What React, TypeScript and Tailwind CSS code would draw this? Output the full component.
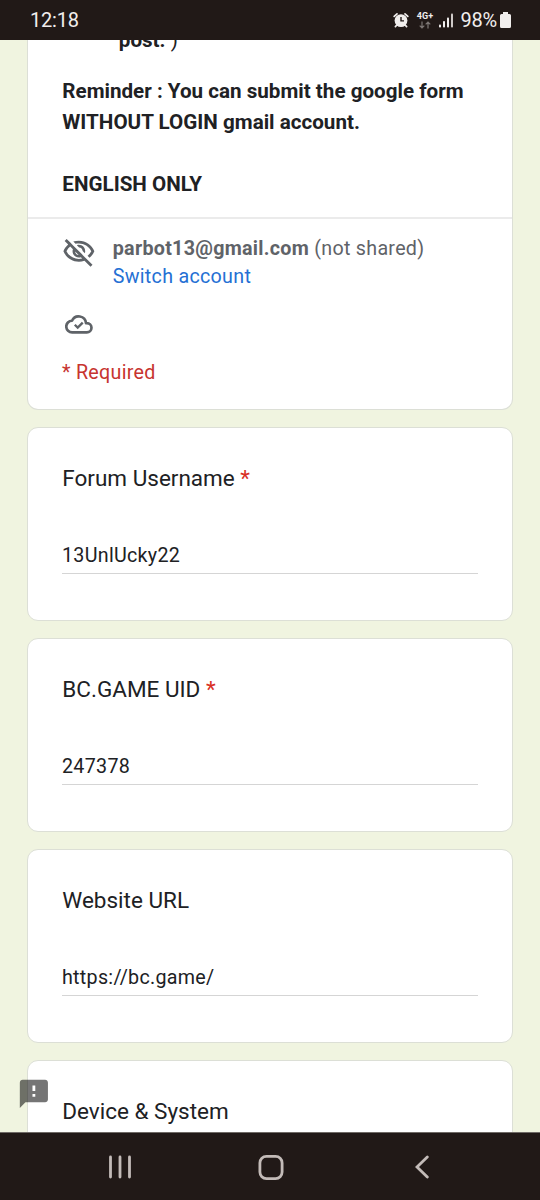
import React from "react";

type Question = { title: string; required?: boolean; value?: string };

const questions: Question[] = [
  { title: "Forum Username", required: true, value: "13UnlUcky22" },
  { title: "BC.GAME UID", required: true, value: "247378" },
  { title: "Website URL", value: "https://bc.game/" },
  { title: "Device & System", value: "" },
];

function StatusBar() {
  return (
    <header className="flex h-10 shrink-0 items-center justify-between bg-[#211917] pl-[30px] pr-[29px] text-[#f1eeed]">
      <span className="text-[20px] leading-10 tracking-[-0.2px]">12:18</span>
      <div className="flex items-center">
        <svg className="mr-[7px] h-4 w-4" viewBox="0 0 16 16" fill="none">
          <circle cx="8" cy="8.6" r="6.4" fill="#f1eeed" />
          <path d="M1.2 4.4 4 1.8M14.8 4.4 12 1.8M3.6 13.2 2.4 14.6M12.4 13.2l1.2 1.4" stroke="#f1eeed" strokeWidth="1.7" strokeLinecap="round" />
          <path d="M8 5v3.9h3" stroke="#211917" strokeWidth="1.4" />
        </svg>
        <div className="mr-[6px] flex w-[17px] flex-col items-center">
          <span className="text-[9px] leading-[9px] font-bold">4G+</span>
          <svg className="h-[8px] w-[12px]" viewBox="0 0 12 8" fill="none" stroke="#7d7775" strokeWidth="1.2">
            <path d="M3 .5v6.5M.7 4.7 3 7l2.3-2.3M9 7.5V1M6.7 3.3 9 1l2.3 2.3" />
          </svg>
        </div>
        <svg className="mr-[7px] h-[15px] w-[14px]" viewBox="0 0 14 15" fill="#f1eeed">
          <rect x="0" y="11.5" width="2" height="3" rx=".8" />
          <rect x="4" y="8" width="2" height="6.5" rx=".8" />
          <rect x="8" y="4.5" width="2" height="10" rx=".8" />
          <rect x="12" y="0.5" width="2" height="14" rx=".8" fill="#cfcac8" />
        </svg>
        <span className="text-[20px] leading-10 tracking-[-0.2px]">98%</span>
        <svg className="ml-[3px] h-4 w-[11px]" viewBox="0 0 11 16" fill="#f1eeed">
          <path d="M3 0h5v2h1.5Q11 2 11 3.5v11Q11 16 9.500 16h-8Q0 16 0 14.500v-11Q0 2 1.500 2H3z" />
        </svg>
      </div>
    </header>
  );
}

function EyeOffIcon() {
  return (
    <svg className="h-[33.75px] w-[33.75px] shrink-0" viewBox="0 0 24 24" fill="#5f6368">
      <path d="M10.58 7.25l1.56 1.56c1.38.07 2.47 1.17 2.54 2.54l1.56 1.56c.16-.44.26-.91.26-1.41C16.500 9.020 14.480 7 12 7c-.5 0-.97.1-1.420.25z" />
      <path d="M12 6c3.790 0 7.170 2.130 8.820 5.500-.64 1.320-1.560 2.440-2.660 3.330l1.420 1.420c1.510-1.260 2.700-2.890 3.430-4.740C21.270 7.110 17 4 12 4c-1.400 0-2.730.25-3.980.7L9.630 6.300C10.400 6.120 11.190 6 12 6z" />
      <path d="M16.430 15.930l-1.250-1.250-1.270-1.270-3.820-3.820-1.270-1.270-1.250-1.250-1.480-1.480-2.780-2.780-1.420 1.410 2.530 2.530C2.920 8.020 1.730 9.640 1 11.500 2.730 15.890 7 19 12 19c1.400 0 2.730-.25 3.980-.7l4.300 4.300 1.410-1.410-3.780-3.780-1.480-1.480zM11.860 14.190c-1.380-.07-2.470-1.170-2.540-2.540l2.540 2.540zM12 17c-3.790 0-7.170-2.130-8.820-5.500.64-1.320 1.560-2.440 2.660-3.330l1.910 1.910C7.600 10.530 7.500 11 7.500 11.500c0 2.480 2.020 4.500 4.500 4.500.5 0 .97-.1 1.420-.25l.95.95C13.600 16.880 12.810 17 12 17z" />
    </svg>
  );
}

function CloudDoneIcon() {
  return (
    <svg className="ml-[3px] h-[28px] w-[28px]" viewBox="0 0 24 24" fill="none" stroke="#5f6368" strokeWidth="2.300">
      <path d="M18.700 19.200H6.200A5 5 0 0 1 6 9.200A6.300 6.300 0 0 1 18 11.200H18.700a4 4 0 0 1 0 8z" strokeLinejoin="round" />
      <path d="M8.400 12.600l2.500 2.500 4.300-4.300" strokeWidth="2" />
    </svg>
  );
}

function IntroCard() {
  return (
    <section className="h-[370px] w-[486px] shrink-0 overflow-hidden rounded-b-[11px] border border-t-0 border-[#dcdfd6] bg-white">
      <div className="flow-root h-[177px] pl-[34.3px] text-[20.6px] leading-[31px] text-[#202124]">
        <p className="mt-[-15px] pl-[56.5px]">
          <b>post. </b>)
        </p>
        <p className="mt-[20px] font-bold tracking-[0.01px]">
          Reminder : You can submit the google form
          <br />
          WITHOUT LOGIN gmail account.
          <br />
          <br />
          ENGLISH ONLY
        </p>
      </div>
      <div className="border-t-2 border-[#ebebeb] pl-[34px]">
        <div className="flex gap-[17px] pt-[16px] text-[19.69px] leading-[28px] tracking-[0.28px]">
          <EyeOffIcon />
          <div>
            <p className="text-[#5f6368]">
              <span className="font-bold">parbot13@gmail.com</span> (not shared)
            </p>
            <p className="text-[#2570d4]">Switch account</p>
          </div>
        </div>
        <div className="mt-[19px]">
          <CloudDoneIcon />
        </div>
        <p className="mt-[21px] text-[19.69px] leading-[28px] tracking-[0.28px] text-[#c7342f]">* Required</p>
      </div>
    </section>
  );
}

function QuestionCard({ title, required, value }: Question) {
  return (
    <section className="h-[194px] w-[486px] shrink-0 rounded-[11px] border border-[#dcdfd6] bg-white px-[34px] pt-[33px] text-[#202124]">
      <h2 className="pl-[0.3px] text-[22.5px] leading-[34px]">
        {title}
        {required && <span className="text-[#d93025]"> *</span>}
      </h2>
      <div className="mt-[43px] h-[36px] border-b border-[#d5d5d5] text-[19.69px] leading-[36px] tracking-[0.28px]">
        {value}
      </div>
    </section>
  );
}

function NavigationBar() {
  return (
    <nav className="flex h-[68px] shrink-0 items-start border-t border-[#6f6a66] bg-[#211917] pt-[22px] pl-[108px]">
      <svg className="h-6 w-6" viewBox="0 0 24 24" stroke="#c3bbb8" strokeWidth="2.800" strokeLinecap="round">
        <path d="M2.500 2v20M12 2v20M21.500 2v20" />
      </svg>
      <svg className="ml-[126px] h-[26px] w-[26px]" viewBox="0 0 26 26" fill="none" stroke="#c3bbb8" strokeWidth="2.800">
        <rect x="1.900" y="1.400" width="22.200" height="22.200" rx="6.500" />
      </svg>
      <svg className="ml-[131px] h-6 w-[14px]" viewBox="0 0 14 24" fill="none" stroke="#c3bbb8" strokeWidth="2.800" strokeLinecap="round">
        <path d="M12.300 2 2 12l10.300 10" />
      </svg>
    </nav>
  );
}

export default function App() {
  return (
    <div className="flex h-[1200px] w-[540px] flex-col overflow-hidden bg-[#f0f4e0] font-['Roboto',sans-serif]">
      <StatusBar />
      <main className="relative h-[1092px] shrink-0 overflow-hidden">
        <div className="flex flex-col gap-[17px] pl-[27px]">
          <IntroCard />
          {questions.map((q) => (
            <QuestionCard key={q.title} {...q} />
          ))}
        </div>
        <svg className="absolute bottom-[21.500px] left-[17px] h-[33.75px] w-[33.75px]" viewBox="0 0 24 24" fill="#000" fillOpacity=".54">
          <path d="M20 2H4c-1.100 0-1.990.9-1.990 2L2 22l4-4h14c1.100 0 2-.9 2-2V4c0-1.100-.9-2-2-2zm-7 12h-2v-2h2v2zm0-4h-2V6h2v4z" />
        </svg>
      </main>
      <NavigationBar />
    </div>
  );
}
